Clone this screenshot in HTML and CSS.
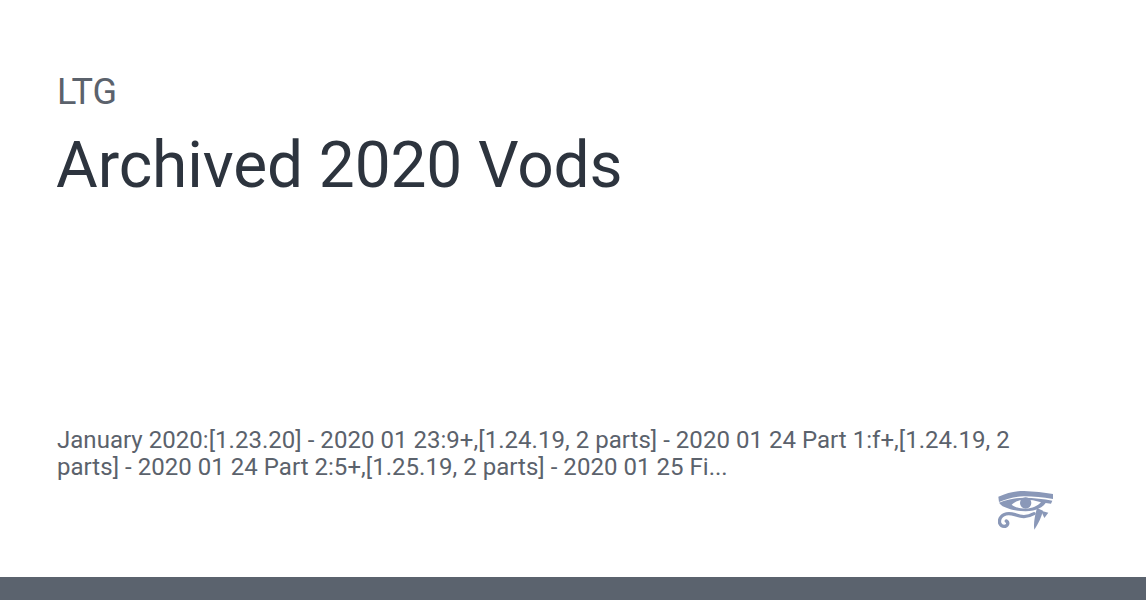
FILE: index.html
```html
<!DOCTYPE html>
<html lang="en">
<head>
  <meta charset="UTF-8" />
  <title>Archived 2020 Vods</title>
  <link rel="stylesheet" href="styles.css">
</head>
<body>
  <div class="card">
    <div class="head">
      <div class="author">LTG</div>
      <h1 class="title">Archived 2020 Vods</h1>
    </div>
    <p class="excerpt">January 2020:[1.23.20] - 2020 01 23:9+,[1.24.19, 2 parts] - 2020 01 24 Part 1:f+,[1.24.19, 2 parts] - 2020 01 24 Part 2:5+,[1.25.19, 2 parts] - 2020 01 25 Fi...</p>
    <div class="logo-row">
      <svg class="logo" viewBox="57 35 165 117" width="55" height="39">
        <path fill="#8a98b8" d="M58 52 C85 40 110 34 135 35 C165 36 195 40 222 44 L222 59 C190 54 165 51 135 51 C110 51 85 57 60 68 Z"/>
        <path fill="#8a98b8" d="M60 70 C85 60 110 55 135 55 C165 55 195 59 220 64 L216 73 L200 71 C190 86 165 96 140 96 C118 96 98 92 82 85 C75 83 67 79 60 70 Z M98 76 C108 84 124 88 140 88 C160 88 176 80 186 69 C170 63 155 61 135 61 C120 61 108 67 98 76 Z"/>
        <circle fill="#8a98b8" cx="140" cy="71" r="17"/>
        <path fill="none" stroke="#8a98b8" stroke-width="10" stroke-linecap="round" d="M165 103 C142 116 125 112 108 106 C90 100 72 102 64 116 C58 128 63 141 75 141 C86 141 90 130 82 125"/>
        <path fill="#8a98b8" d="M174 86 L192 94 C188 112 178 132 166 151 C163 134 167 110 174 86 Z"/>
        <path fill="#8a98b8" d="M186 94 L208 100 L196 116 Z"/>
      </svg>
    </div>
    <div class="bar"></div>
  </div>
</body>
</html>
```

FILE: styles.css
```css
html, body {
  margin: 0;
  height: 100%;
  background: #fff;
  overflow: hidden;
}

.card {
  height: 600px;
  display: flex;
  flex-direction: column;
  font-family: "Roboto", sans-serif;
}

.head {
  padding: 71px 57px 0;
  flex: 1;
}

.author {
  font-size: 36px;
  line-height: 42px;
  color: #5b626c;
}

.title {
  margin: 11px 0 0 -1px;
  font-size: 64px;
  line-height: 84px;
  font-weight: 400;
  letter-spacing: -0.1px;
  color: #2d343e;
}

.excerpt {
  margin: 0;
  padding: 0 93px 0 57px;
  font-size: 24px;
  line-height: 27px;
  letter-spacing: 0.03px;
  color: #5b626c;
}

.logo-row {
  display: flex;
  justify-content: flex-end;
  padding: 10px 93px 47px 0;
}

.logo {
  display: block;
}

.bar {
  height: 23px;
  background: #5b636e;
}
```
